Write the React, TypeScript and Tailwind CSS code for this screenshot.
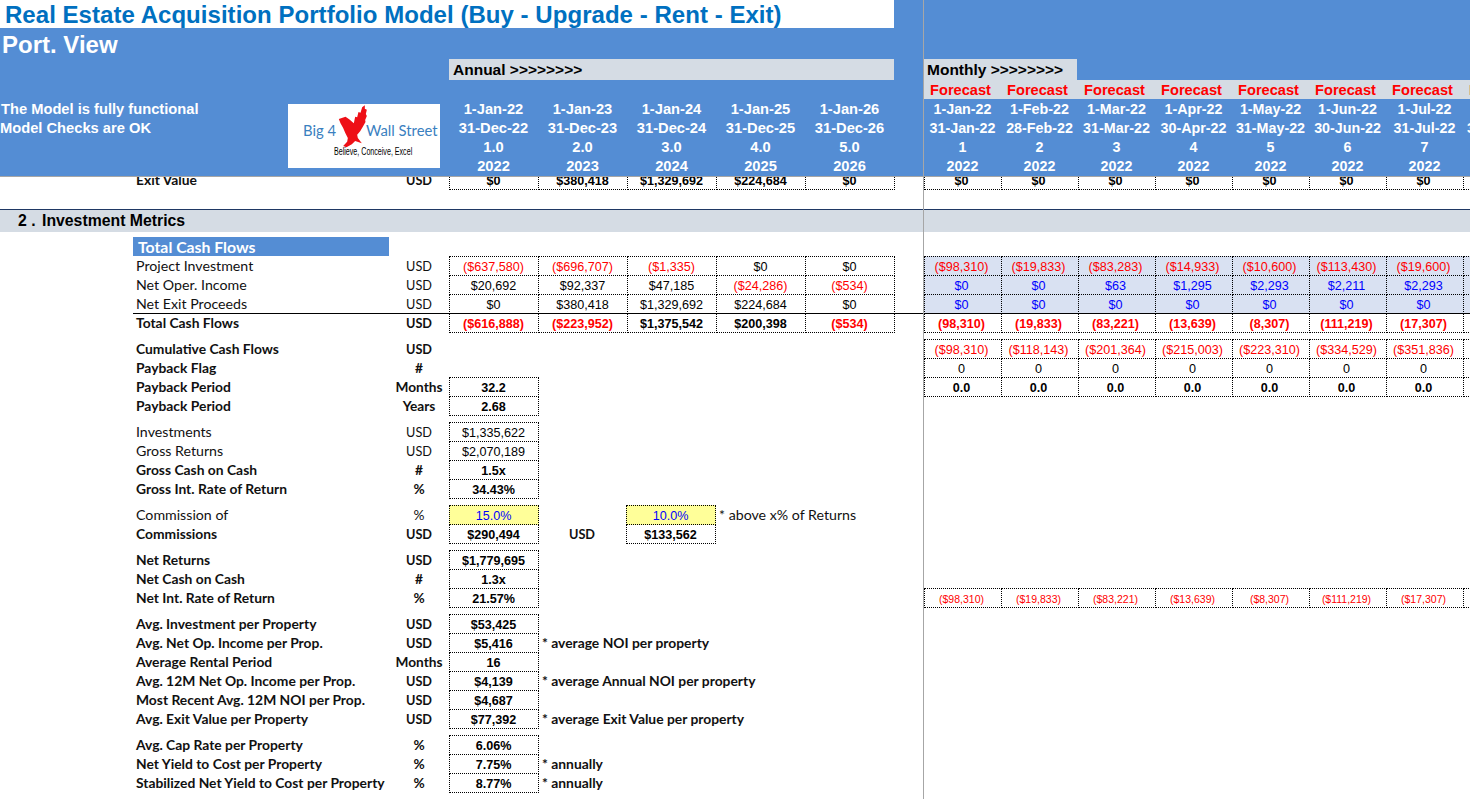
import React from "react";

type Tone = "black" | "red" | "blue" | "small";
type CellDef = { t?: string; tone?: Tone; bold?: boolean; fill?: "y" | "l" };

const parse = (t: string, bold = false, fill?: "y" | "l", blueOnly = false): CellDef => ({
  t,
  bold,
  fill,
  tone: t.startsWith("(") ? "red" : blueOnly ? "blue" : "black",
});

function Cell({ c, monthly, ruleTop }: { c: CellDef; monthly?: boolean; ruleTop?: boolean }) {
  return (
    <div
      className={[
        "h-[20px] shrink-0 -mr-px border border-dotted border-black flex items-center justify-center whitespace-nowrap leading-none pt-[2px]",
        monthly ? "w-[78px] pr-[3px]" : "w-[90px] pr-[1px]",
        ruleTop ? "[border-top-style:solid] -mt-px" : "",
        c.bold ? "font-bold" : "",
        c.tone === "small" ? "text-[10.5px] text-[#ff0000]" : "text-[12.6px]",
        c.tone === "red" ? "text-[#ff0000]" : "",
        c.tone === "blue" ? "text-[#0000ff]" : "",
        c.tone === "black" || !c.tone ? "text-black" : "",
        c.fill === "y" ? "bg-[#ffff99]" : "",
        c.fill === "l" ? "bg-[#d9e1f2]" : "",
      ].join(" ")}
    >
      {c.t}
    </div>
  );
}

function Row({
  label,
  unit,
  bold,
  cells = [],
  note,
  noteBold,
  extra,
  rule,
}: {
  label: string;
  unit: string;
  bold?: boolean;
  cells?: CellDef[];
  note?: string;
  noteBold?: boolean;
  extra?: React.ReactNode;
  rule?: boolean;
}) {
  return (
    <div className={"h-[19px] ml-[133px] flex items-start " + (rule ? "border-t border-black" : "")}>
      <Label bold={bold} rule={rule}>
        {label}
      </Label>
      <Unit bold={bold} rule={rule}>
        {unit}
      </Unit>
      {cells.map((c, i) => (
        <Cell key={i} c={c} ruleTop={rule} />
      ))}
      {extra}
      {note && (
        <div
          className={
            "h-[19px] pl-[4px] flex items-center font-['Lato',sans-serif] text-[#111] whitespace-nowrap " +
            (noteBold ? "pt-[2px] font-bold text-[13.85px]" : "pt-[1px] text-[14.2px]")
          }
        >
          {note}
        </div>
      )}
    </div>
  );
}

function Label({ children, bold, rule }: { children: React.ReactNode; bold?: boolean; rule?: boolean }) {
  return (
    <div
      className={
        "w-[256px] shrink-0 pl-[3px] h-[19px] flex items-center font-['Lato',sans-serif] text-[#111] whitespace-nowrap " +
        (bold ? "pt-[2px] font-bold text-[13.85px]" : "pt-[1px] text-[14.2px]") +
        (rule ? " -mt-px" : "")
      }
    >
      {children}
    </div>
  );
}

function Unit({ children, bold, rule, wide }: { children: string; bold?: boolean; rule?: boolean; wide?: boolean }) {
  return (
    <div
      className={
        (wide ? "w-[88px]" : "w-[60px]") +
        " shrink-0 h-[19px] pt-[2px] flex items-center justify-center font-['Lato',sans-serif] text-[#111] " +
        (bold ? "font-bold " : "") +
        (children === "USD" ? "text-[12.7px]" : "text-[13.7px]") +
        (rule ? " -mt-px" : "")
      }
    >
      {children}
    </div>
  );
}

function MRow({ vals, rule }: { vals: CellDef[]; rule?: boolean }) {
  return (
    <div className={"h-[19px] flex items-start " + (rule ? "border-t border-black" : "")}>
      {vals.map((c, i) => (
        <Cell key={i} c={c} monthly ruleTop={rule} />
      ))}
    </div>
  );
}

const Gap = ({ h = "h-[7px]" }: { h?: string }) => <div className={h} />;

function Band({ children }: { children?: React.ReactNode }) {
  return <div className="h-[23px] border-t border-[#1f3864] bg-[#d5dce4] flex items-center">{children}</div>;
}

function Logo() {
  return (
    <div className="relative w-[152px] h-[64px] bg-white shrink-0 mt-[5px] overflow-hidden font-normal">
      <div className="flex pt-[16px] h-[41px] text-[#3a80c0] text-[14.8px] font-['Lato',sans-serif] leading-[20px] whitespace-nowrap">
        <span className="ml-[15px] w-[63px]">Big 4</span>
        <span>Wall Street</span>
      </div>
      <div className="ml-[46px] w-[98px] origin-left scale-x-[0.646] text-black text-[11px] leading-[12px] font-['Liberation_Sans',sans-serif] whitespace-nowrap">
        Believe, Conceive, Excel
      </div>
      <svg className="absolute left-[49px] top-0" width="32" height="45" viewBox="20 0 95 135">
        <path
          fill="#ee0f16"
          d="M25 45 L45 38 L56 46 L70 58 L74 38 L80 40 L84 24 L90 26 L95 10 L103 4 L103 14 L109 17 L106 30 L109 36 L104 48 L105 54 L97 68 L89 82 L80 92 L82 102 L94 118 L74 111 L64 121 L48 130 L38 126 L50 113 L52 102 L44 86 L38 72 L30 58 Z"
        />
      </svg>
    </div>
  );
}

const annualHead = [
  ["1-Jan-22", "31-Dec-22", "1.0", "2022"],
  ["1-Jan-23", "31-Dec-23", "2.0", "2023"],
  ["1-Jan-24", "31-Dec-24", "3.0", "2024"],
  ["1-Jan-25", "31-Dec-25", "4.0", "2025"],
  ["1-Jan-26", "31-Dec-26", "5.0", "2026"],
];
const monthHead = [
  ["1-Jan-22", "31-Jan-22", "1", "2022"],
  ["1-Feb-22", "28-Feb-22", "2", "2022"],
  ["1-Mar-22", "31-Mar-22", "3", "2022"],
  ["1-Apr-22", "30-Apr-22", "4", "2022"],
  ["1-May-22", "31-May-22", "5", "2022"],
  ["1-Jun-22", "30-Jun-22", "6", "2022"],
  ["1-Jul-22", "31-Jul-22", "7", "2022"],
  ["1-Aug-22", "31-Aug-22", "8", "2022"],
];

function HeadCol({ lines, w }: { lines: string[]; w: string }) {
  return (
    <div className={w + " shrink-0 flex flex-col items-center"}>
      {lines.map((l, i) => (
        <div key={i} className="h-[19px] leading-[21px] whitespace-nowrap">
          {l}
        </div>
      ))}
    </div>
  );
}

const A = (xs: string[], bold = false) => xs.map((x) => parse(x, bold));
const M = (xs: string[], opts: { bold?: boolean; fill?: "l"; blue?: boolean; tone?: Tone } = {}) =>
  xs.map((x) => ({ ...parse(x, opts.bold, opts.fill, opts.blue), ...(opts.tone ? { tone: opts.tone } : {}) }));
const one = (t: string, bold = true, fill?: "y") => [
  { t, bold, fill, tone: fill ? ("blue" as Tone) : ("black" as Tone) },
];

export default function App() {
  return (
    <div className="w-[1470px] h-[799px] overflow-hidden flex bg-white font-['Liberation_Sans',Arial,sans-serif]">
      {/* Frozen label and annual pane */}
      <div className="w-[924px] shrink-0 border-r border-[#a6a6a6] h-[799px] overflow-hidden">
        <header className="h-[177px] bg-[#548dd4] border-b border-[#a6a6a6]">
          <div className="h-[28px] w-[894px] bg-white pl-[5px] pt-[1px] flex items-center text-[#0070c0] font-bold text-[24px] tracking-[0.04px] whitespace-nowrap">
            Real Estate Acquisition Portfolio Model (Buy - Upgrade - Rent - Exit)
          </div>
          <div className="h-[31px] pl-[2px] pt-[2px] flex items-center text-white font-bold text-[24px] whitespace-nowrap">
            Port. View
          </div>
          <div className="h-[21px] ml-[449px] w-[445px] bg-[#d5dce4] pl-[4px] flex items-center text-black font-bold text-[15.5px]">
            Annual &gt;&gt;&gt;&gt;&gt;&gt;&gt;&gt;
          </div>
          <div className="h-[19px]" />
          <div className="flex text-white font-bold text-[14.7px]">
            <div className="w-[288px] shrink-0">
              <div className="h-[19px] leading-[21px] pl-[1px]">The Model is fully functional</div>
              <div className="h-[19px] leading-[21px]">Model Checks are OK</div>
            </div>
            <div className="w-[161px] shrink-0">
              <Logo />
            </div>
            {annualHead.map((h) => (
              <HeadCol key={h[0]} lines={h} w="w-[89px]" />
            ))}
          </div>
        </header>

        <div className="h-[13px] overflow-hidden ml-[133px] flex items-end">
          <div className="h-[20px] flex items-start">
            <Label bold>Exit Value</Label>
            <Unit bold>USD</Unit>
            {A(["$0", "$380,418", "$1,329,692", "$224,684", "$0"], true).map((c, i) => (
              <Cell key={i} c={c} />
            ))}
          </div>
        </div>
        <Gap h="h-[19px]" />
        <Band>
          <span className="pl-[18px] w-[42px] shrink-0 box-content font-bold text-[15.8px] text-black whitespace-nowrap">2 .</span>
          <span className="-ml-[18px] font-bold text-[15.8px] text-black whitespace-nowrap">Investment Metrics</span>
        </Band>
        <Gap h="h-[5px]" />
        <div className="ml-[133px] w-[256px] h-[19px] bg-[#548dd4] pl-[5px] flex items-center font-['Lato',sans-serif] font-bold text-[15.8px] text-white">
          Total Cash Flows
        </div>
        <Row label="Project Investment" unit="USD" cells={A(["($637,580)", "($696,707)", "($1,335)", "$0", "$0"])} />
        <Row label="Net Oper. Income" unit="USD" cells={A(["$20,692", "$92,337", "$47,185", "($24,286)", "($534)"])} />
        <Row label="Net Exit Proceeds" unit="USD" cells={A(["$0", "$380,418", "$1,329,692", "$224,684", "$0"])} />
        <Row label="Total Cash Flows" unit="USD" bold rule cells={A(["($616,888)", "($223,952)", "$1,375,542", "$200,398", "($534)"], true)} />
        <Gap />
        <Row label="Cumulative Cash Flows" unit="USD" bold />
        <Row label="Payback Flag" unit="#" bold />
        <Row label="Payback Period" unit="Months" bold cells={one("32.2")} />
        <Row label="Payback Period" unit="Years" bold cells={one("2.68")} />
        <Gap />
        <Row label="Investments" unit="USD" cells={one("$1,335,622", false)} />
        <Row label="Gross Returns" unit="USD" cells={one("$2,070,189", false)} />
        <Row label="Gross Cash on Cash" unit="#" bold cells={one("1.5x")} />
        <Row label="Gross Int. Rate of Return" unit="%" bold cells={one("34.43%")} />
        <Gap />
        <Row
          label="Commission of"
          unit="%"
          cells={one("15.0%", false, "y")}
          extra={
            <>
              <div className="w-[88px] shrink-0" />
              <Cell c={one("10.0%", false, "y")[0]} />
            </>
          }
          note="* above x% of Returns"
        />
        <Row
          label="Commissions"
          unit="USD"
          bold
          cells={one("$290,494")}
          extra={
            <>
              <Unit bold wide>
                USD
              </Unit>
              <Cell c={one("$133,562")[0]} />
            </>
          }
        />
        <Gap />
        <Row label="Net Returns" unit="USD" bold cells={one("$1,779,695")} />
        <Row label="Net Cash on Cash" unit="#" bold cells={one("1.3x")} />
        <Row label="Net Int. Rate of Return" unit="%" bold cells={one("21.57%")} />
        <Gap />
        <Row label="Avg. Investment per Property" unit="USD" bold cells={one("$53,425")} />
        <Row label="Avg. Net Op. Income per Prop." unit="USD" bold cells={one("$5,416")} note="* average NOI per property" noteBold />
        <Row label="Average Rental Period" unit="Months" bold cells={one("16")} />
        <Row label="Avg. 12M Net Op. Income per Prop." unit="USD" bold cells={one("$4,139")} note="* average Annual NOI per property" noteBold />
        <Row label="Most Recent Avg. 12M NOI per Prop." unit="USD" bold cells={one("$4,687")} />
        <Row label="Avg. Exit Value per Property" unit="USD" bold cells={one("$77,392")} note="* average Exit Value per property" noteBold />
        <Gap />
        <Row label="Avg. Cap Rate per Property" unit="%" bold cells={one("6.06%")} />
        <Row label="Net Yield to Cost per Property" unit="%" bold cells={one("7.75%")} note="* annually" noteBold />
        <Row label="Stabilized Net Yield to Cost per Property" unit="%" bold cells={one("8.77%")} note="* annually" noteBold />
      </div>

      {/* Monthly pane */}
      <div className="flex-1 min-w-0 h-[799px] overflow-hidden">
        <header className="h-[177px] bg-[#548dd4] border-b border-[#a6a6a6] pt-[59px] overflow-hidden">
          <div className="h-[21px] w-[153px] bg-[#d5dce4] pl-[3px] flex items-center text-black font-bold text-[15.5px]">
            Monthly &gt;&gt;&gt;&gt;&gt;&gt;&gt;&gt;
          </div>
          <div className="h-[19px] w-[616px] bg-[#d5dce4] flex text-[#ff0000] font-bold text-[14.6px]">
            {monthHead.map((h) => (
              <div key={h[0]} className="w-[77px] shrink-0 pr-[4px] text-center leading-[21px]">
                Forecast
              </div>
            ))}
          </div>
          <div className="flex w-[616px] text-white font-bold text-[14.3px]">
            {monthHead.map((h) => (
              <HeadCol key={h[0]} lines={h} w="w-[77px]" />
            ))}
          </div>
        </header>

        <div className="h-[13px] overflow-hidden flex items-end">
          <MRowBottom />
        </div>
        <Gap h="h-[19px]" />
        <Band />
        <Gap h="h-[24px]" />
        <MRow vals={M(["($98,310)", "($19,833)", "($83,283)", "($14,933)", "($10,600)", "($113,430)", "($19,600)", ""], { fill: "l" })} />
        <MRow vals={M(["$0", "$0", "$63", "$1,295", "$2,293", "$2,211", "$2,293", ""], { fill: "l", blue: true })} />
        <MRow vals={M(["$0", "$0", "$0", "$0", "$0", "$0", "$0", ""], { fill: "l", blue: true })} />
        <MRow rule vals={M(["(98,310)", "(19,833)", "(83,221)", "(13,639)", "(8,307)", "(111,219)", "(17,307)", ""], { bold: true })} />
        <Gap />
        <MRow vals={M(["($98,310)", "($118,143)", "($201,364)", "($215,003)", "($223,310)", "($334,529)", "($351,836)", ""])} />
        <MRow vals={M(["0", "0", "0", "0", "0", "0", "0", ""])} />
        <MRow vals={M(["0.0", "0.0", "0.0", "0.0", "0.0", "0.0", "0.0", ""], { bold: true })} />
        <Gap h="h-[192px]" />
        <MRow vals={M(["($98,310)", "($19,833)", "($83,221)", "($13,639)", "($8,307)", "($111,219)", "($17,307)", ""], { tone: "small" })} />
      </div>
    </div>
  );
}

function MRowBottom() {
  return (
    <div className="h-[20px] flex items-start">
      {M(["$0", "$0", "$0", "$0", "$0", "$0", "$0", ""], { bold: true }).map((c, i) => (
        <Cell key={i} c={c} monthly />
      ))}
    </div>
  );
}
